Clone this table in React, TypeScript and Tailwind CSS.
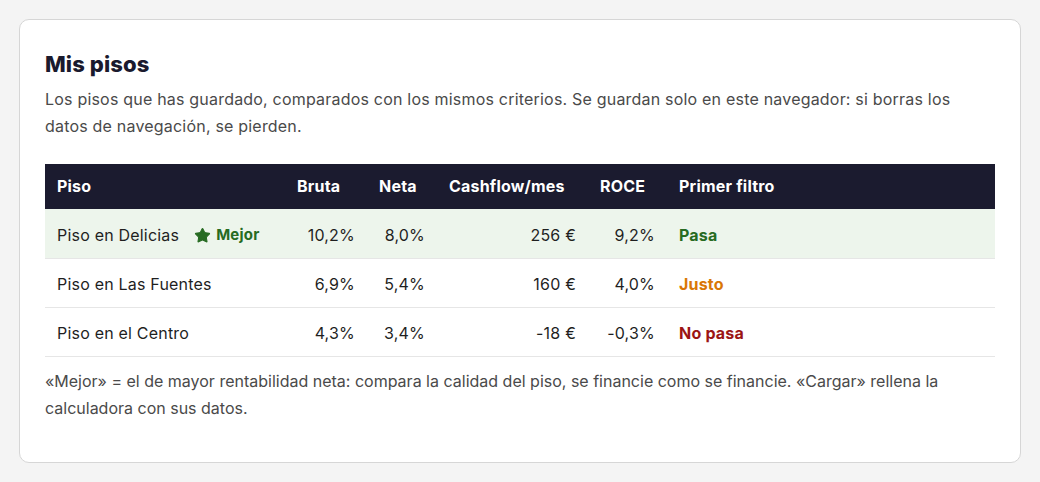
import { Star } from "lucide-react";

type Piso = {
  nombre: string;
  bruta: string;
  neta: string;
  cashflow: string;
  roce: string;
  filtro: "Pasa" | "Justo" | "No pasa";
  mejor?: boolean;
};

const pisos: Piso[] = [
  { nombre: "Piso en Delicias", bruta: "10,2%", neta: "8,0%", cashflow: "256 €", roce: "9,2%", filtro: "Pasa", mejor: true },
  { nombre: "Piso en Las Fuentes", bruta: "6,9%", neta: "5,4%", cashflow: "160 €", roce: "4,0%", filtro: "Justo" },
  { nombre: "Piso en el Centro", bruta: "4,3%", neta: "3,4%", cashflow: "-18 €", roce: "-0,3%", filtro: "No pasa" },
];

const filtroColor = {
  Pasa: "text-[#276b22]",
  Justo: "text-[#d97706]",
  "No pasa": "text-[#9b1515]",
};

const App = () => {
  return (
    <div className="min-h-[482px] bg-[#f4f4f4] pt-[19px] px-[19px] font-['Inter','Liberation_Sans',sans-serif]">
      <div className="bg-white border border-[#d6d6d6] rounded-[10px] px-[25px] pt-[30px] pb-[40px]">
        <h2 className="text-[22px] leading-[28px] font-extrabold tracking-[0.1px] text-[#1a1a2e]">Mis pisos</h2>
        <p className="mt-[8px] text-base leading-[27px] tracking-[0.2px] text-[#4a4a4a]">
          Los pisos que has guardado, comparados con los mismos criterios. Se guardan solo en este navegador: si borras los
          datos de navegación, se pierden.
        </p>

        <table className="mt-[24px] w-full table-fixed border-collapse text-base tracking-[0.2px] text-[#1f1f1f]">
          <colgroup>
            <col className="w-[240px]" />
            <col className="w-[82px]" />
            <col className="w-[70px]" />
            <col className="w-[151px]" />
            <col className="w-[79px]" />
            <col />
          </colgroup>
          <thead>
            <tr className="bg-[#1b1b2f] text-white">
              <th className="pl-3 py-[10px] leading-[25px] text-left font-bold">Piso</th>
              <th className="pl-3 py-[10px] leading-[25px] text-left font-bold">Bruta</th>
              <th className="pl-3 py-[10px] leading-[25px] text-left font-bold">Neta</th>
              <th className="pl-3 py-[10px] leading-[25px] text-left font-bold">Cashflow/mes</th>
              <th className="pl-3 py-[10px] leading-[25px] text-left font-bold">ROCE</th>
              <th className="pl-3 py-[10px] leading-[25px] text-left font-bold">Primer filtro</th>
            </tr>
          </thead>
          <tbody>
            {pisos.map((p) => (
              <tr key={p.nombre} className={`border-b border-[#e6e6e6] ${p.mejor ? "bg-[#edf5ec]" : ""}`}>
                <td className="pl-3 pt-[13px] pb-[11px] leading-6">
                  <span className="flex items-center">
                    <span>{p.nombre}</span>
                    {p.mejor && (
                      <span className="ml-[15px] pt-px flex items-center gap-[5px] text-[15px] font-bold text-[#276b22]">
                        <Star className="w-[17px] h-[17px]" fill="currentColor" strokeWidth={1.5} />
                        Mejor
                      </span>
                    )}
                  </span>
                </td>
                <td className="pr-3 pt-[13px] pb-[11px] leading-6 text-right">{p.bruta}</td>
                <td className="pr-3 pt-[13px] pb-[11px] leading-6 text-right">{p.neta}</td>
                <td className="pr-3 pt-[13px] pb-[11px] leading-6 text-right">{p.cashflow}</td>
                <td className="pr-3 pt-[13px] pb-[11px] leading-6 text-right">{p.roce}</td>
                <td className={`pl-3 pt-[13px] pb-[11px] leading-6 font-bold ${filtroColor[p.filtro]}`}>{p.filtro}</td>
              </tr>
            ))}
          </tbody>
        </table>

        <p className="mt-[11px] text-base leading-[27px] text-[#4a4a4a]">
          «Mejor» = el de mayor rentabilidad neta: compara la calidad del piso, se financie como se financie. «Cargar» rellena la
          calculadora con sus datos.
        </p>
      </div>
    </div>
  );
};

export default App;
